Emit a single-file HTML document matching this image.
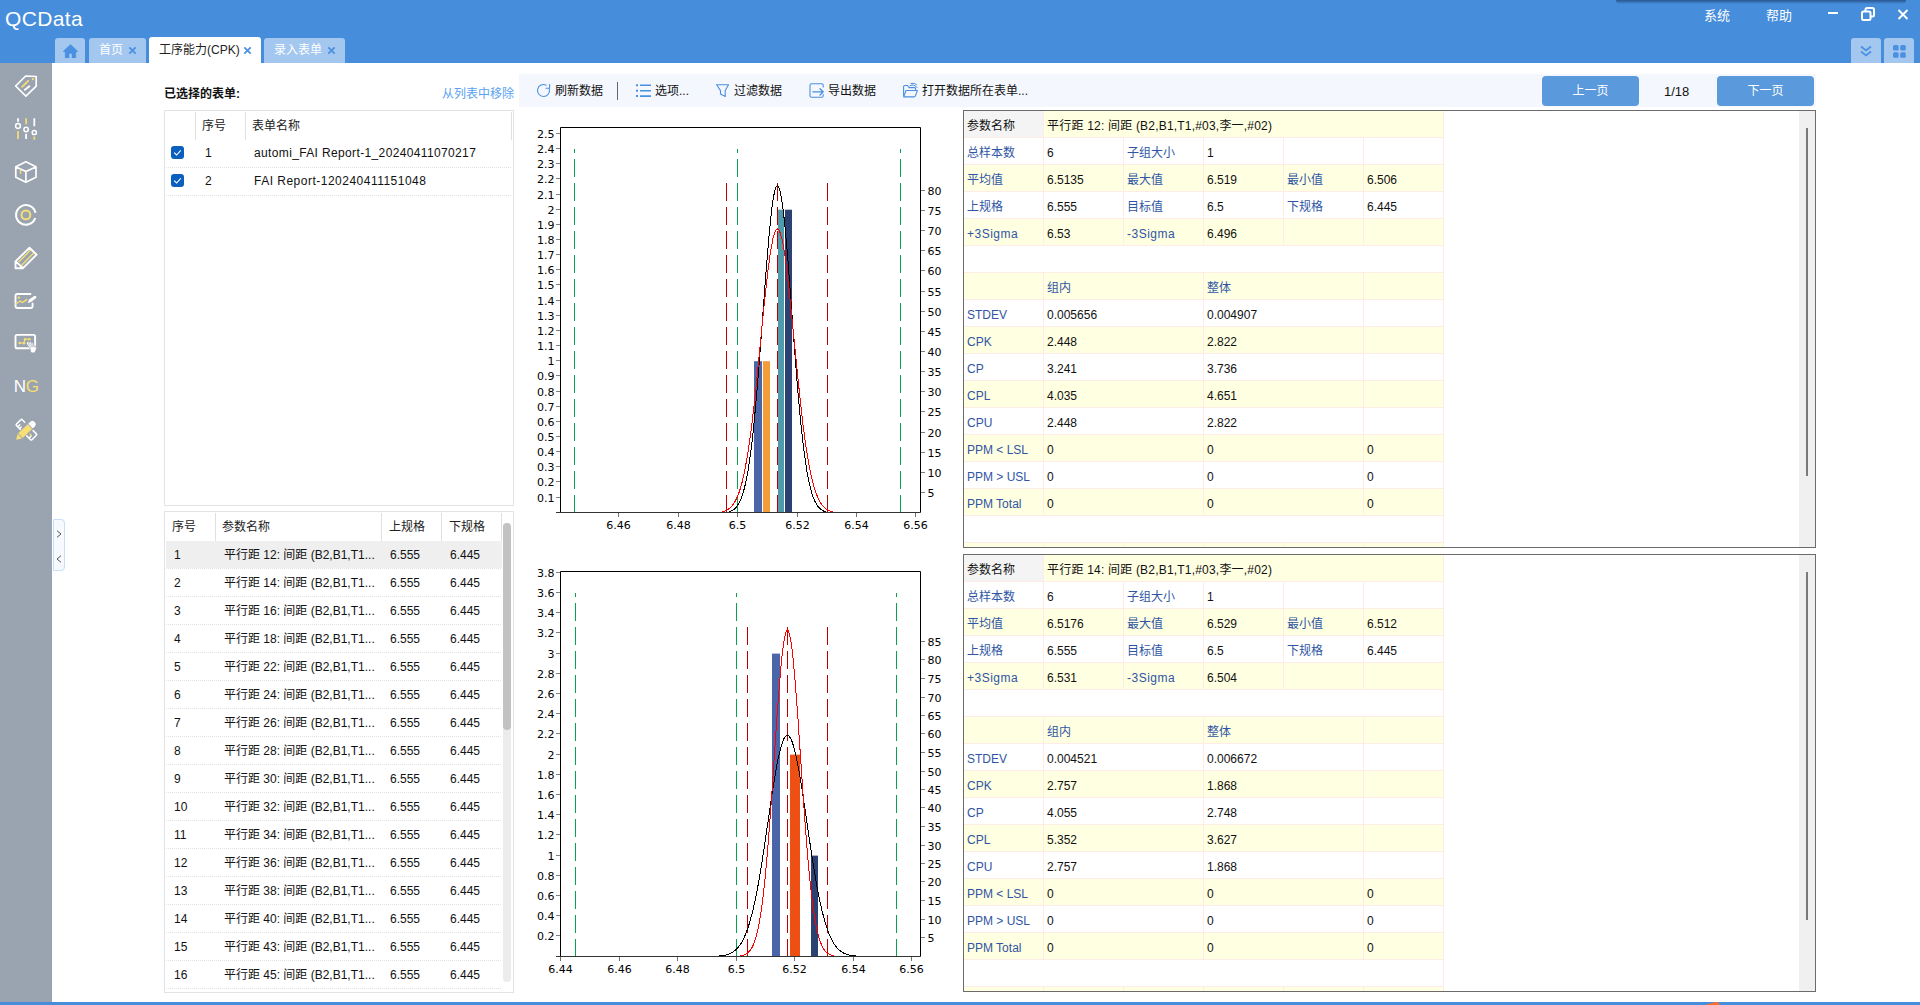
<!DOCTYPE html><html lang="zh-CN"><head><meta charset="utf-8"><title>QCData</title><style>
*{box-sizing:border-box;margin:0;padding:0}
html,body{width:1920px;height:1005px;overflow:hidden;background:#fff}
body{position:relative;font-family:"Liberation Sans","Noto Sans CJK SC",sans-serif;font-size:12px;color:#111;line-height:1}
.abs{position:absolute}
#title{left:0;top:0;width:1920px;height:63px;background:#468ddb}
#logo{left:5px;top:5.5px;font-size:21px;color:#fff;line-height:26px;letter-spacing:.35px}
.tab{top:38px;height:25px;background:#a4c7f0;border-radius:3px 3px 0 0;color:#fff;font-size:12px;line-height:24px;white-space:nowrap}
.tab.act{top:37px;height:26px;background:#fff;color:#222;line-height:26px}
.tab span.t{position:absolute;top:0}
.menu{top:8px;color:#fff;font-size:13px;line-height:16px}
#side{left:0;top:63px;width:52px;height:939px;background:#9aa3b0}
#foot{left:0;top:1002px;width:1920px;height:3px;background:#468ddb}
#tb{left:519px;top:74px;width:1297px;height:33px;background:#f4f7fd}
.tbt{top:75px;height:33px;line-height:33px;font-size:12px;color:#111;white-space:nowrap}
.btn{top:76px;height:30px;width:97px;background:#5a99dc;border-radius:4px;color:#fff;text-align:center;line-height:31px;font-size:12px}
.panel{border:1px solid #e3e3e3;background:#fff}
.hd{color:#222;white-space:nowrap}
.vsep{width:1px;background:#e0e0e0}
.dot{height:1px;left:166px;width:346px;background-image:linear-gradient(90deg,#e0e0e0 1px,transparent 1px);background-size:2px 1px}
.cell{white-space:nowrap;line-height:14px}
.cb{width:13px;height:13px;border-radius:3px;background:#0b5fbf}
.rp{border:1px solid #6b6b6b;background:#fff;overflow:hidden}
.g{position:absolute;height:27px;border-right:1px solid #ffece6;border-bottom:1px solid #ffece6;padding:8px 0 0 3px;white-space:nowrap;line-height:14px;font-size:12px;color:#111}
.g.y{background:#ffffe1}
.g.l{color:#2f55a4}
.g.h{background:#f4f4f4;color:#111}
svg text{font-family:"DejaVu Sans","Liberation Sans",sans-serif;font-size:11px;fill:#000}
</style></head><body><div id="title" class="abs"></div><div class="abs" style="left:1616px;top:0;width:290px;height:4px;background:linear-gradient(to bottom,rgba(38,78,132,.85),rgba(38,78,132,.45) 50%,rgba(38,78,132,0));border-radius:0 0 9px 9px"></div><div id="logo" class="abs">QCData</div><div class="abs tab" style="left:55px;width:30px"><svg class="abs" style="left:7.5px;top:5.5px" width="15" height="14.5" viewBox="0 0 15 14.5"><path d="M7.5 0.4 L0.5 7 Q0.1 7.8 1 7.8 H2.2 V13.4 Q2.2 14.3 3.1 14.3 H6 V9.6 H9 V14.3 H11.9 Q12.8 14.3 12.8 13.4 V7.8 H14 Q14.9 7.8 14.5 7 Z" fill="#4a90e2" stroke="#4a90e2" stroke-width="0.5" stroke-linejoin="round"/></svg></div><div class="abs tab" style="left:89px;width:57px"><span class="t" style="left:10px">首页</span><svg class="abs" style="left:38.5px;top:8px" width="9" height="9" viewBox="0 0 9 9"><path d="M1.3 1.3 L7.7 7.7 M7.7 1.3 L1.3 7.7" stroke="#4a90e2" stroke-width="1.7" fill="none"/></svg></div><div class="abs tab act" style="left:149px;width:112px"><span class="t" style="left:10px">工序能力(CPK)</span><svg class="abs" style="left:93.5px;top:9px" width="9" height="9" viewBox="0 0 9 9"><path d="M1.3 1.3 L7.7 7.7 M7.7 1.3 L1.3 7.7" stroke="#4a90e2" stroke-width="1.7" fill="none"/></svg></div><div class="abs tab" style="left:264px;width:81px"><span class="t" style="left:10px">录入表单</span><svg class="abs" style="left:62.5px;top:8px" width="9" height="9" viewBox="0 0 9 9"><path d="M1.3 1.3 L7.7 7.7 M7.7 1.3 L1.3 7.7" stroke="#4a90e2" stroke-width="1.7" fill="none"/></svg></div><div class="abs tab" style="left:1851px;width:30px"><svg class="abs" style="left:9px;top:7px" width="12" height="12" viewBox="0 0 12 12"><path d="M1 1.5 L6 5.5 L11 1.5 M1 6.5 L6 10.5 L11 6.5" stroke="#4a90e2" stroke-width="1.7" fill="none"/></svg></div><div class="abs tab" style="left:1884px;width:30px"><svg class="abs" style="left:9px;top:7px" width="13" height="13" viewBox="0 0 13 13"><g fill="#4a90e2"><rect x="0" y="0" width="5.6" height="5.6" rx="1.5"/><rect x="7.2" y="0" width="5.6" height="5.6" rx="1.5"/><rect x="0" y="7.2" width="5.6" height="5.6" rx="1.5"/><rect x="7.2" y="7.2" width="5.6" height="5.6" rx="1.5"/></g></svg></div><div class="abs menu" style="left:1704px">系统</div><div class="abs menu" style="left:1766px">帮助</div><div class="abs" style="left:1828px;top:12px;width:10px;height:2px;background:#fff"></div><svg class="abs" style="left:1860px;top:6px" width="16" height="16" viewBox="0 0 16 16"><rect x="2" y="5.5" width="8.5" height="8.5" rx="1.5" fill="none" stroke="#fff" stroke-width="2"/><path d="M5.5 5 V3.5 Q5.5 2 7 2 H12.5 Q14 2 14 3.5 V9 Q14 10.5 12.5 10.5 H11" fill="none" stroke="#fff" stroke-width="2"/></svg><svg class="abs" style="left:1897px;top:9px" width="12" height="11" viewBox="0 0 12 11"><path d="M1.5 1 L10.5 10 M10.5 1 L1.5 10" stroke="#fff" stroke-width="2" fill="none"/></svg><div id="side" class="abs"></div><div id="foot" class="abs"></div><svg class="abs" style="left:0;top:63px" width="52" height="400" viewBox="0 63 52 400" fill="none" stroke-linecap="round" stroke-linejoin="round">
<g stroke="#fff" stroke-width="1.9">
<path d="M15.6 86 L25.7 76 L36.2 76.5 L36.2 86.2 L25.9 96.1 Z" stroke-width="1.7"/>
<path d="M24.9 89.8 L29.4 86.3"/>
<path d="M18 118.2 V121.8 M26.1 133.7 V139 M34.3 118.2 V126.3" stroke-linecap="butt" stroke-width="1.8"/>
<g stroke-width="1.5"><circle cx="18" cy="126" r="2.4"/><circle cx="26.1" cy="129.5" r="2.2"/><circle cx="34.3" cy="132.5" r="2.1"/></g>
<path d="M25.9 161.8 L36 166.7 V177.3 L25.9 182.2 L15.8 177.3 V166.7 Z M16 166.9 L25.9 171.5 L35.8 166.9 M25.9 171.5 V182" stroke-width="1.7"/>
<path d="M35.5 212.9 A9.8 9.8 0 1 0 35.2 218" stroke-width="2.1" stroke-linecap="butt"/>
<path d="M15.5 268.2 V261.4 L29.5 247.7 L36.6 254.7 L23 268.2 Z M16 261.6 L22.6 267.8"/>
<path d="M30.5 294 H17.4 Q15.5 294 15.5 295.9 V306.1 Q15.5 308 17.4 308 H30.7 Q32.6 308 32.6 306.1 V303.5"/>
<rect x="15.5" y="334.9" width="19.6" height="13.4" rx="1.6"/>
</g>
<g stroke="#f7df74" stroke-width="1.7">
<path d="M22.1 86.9 L28.2 80.8"/>
<path d="M18 131 V139 M26.1 118.2 V124.3 M34.3 136.4 V139.8" stroke-linecap="butt"/>
<path d="M20.5 170 V173.4" stroke-width="1.4"/>
<circle cx="25.9" cy="214.9" r="4.4" stroke-width="2"/>
<path d="M18.9 261.8 L30.2 250.5 M21.7 265.3 L33.3 253.3" stroke-width="1.3"/>
<path d="M15.6 304 L20.3 301 L22.3 302.6 L27 299.4" stroke-width="1.3"/>
<path d="M19.7 343 H23.9 L25.1 339.2 H29.3" stroke-width="1.1"/>
</g>
<g fill="#f7df74" stroke="none">
<circle cx="32.9" cy="79.1" r="1.15"/>
<circle cx="18.9" cy="297.6" r="1.2"/>
<circle cx="19.7" cy="343" r="1.3"/><circle cx="23.9" cy="343.2" r="1.3"/><circle cx="25.1" cy="339.2" r="1.3"/><circle cx="29.3" cy="339.2" r="1.3"/>
</g>
<!-- pen of chart-edit -->
<path d="M27.6 302.9 L29.2 299.6 L34.2 295.9 Q35.4 295.3 36.1 296.3 Q36.8 297.3 35.9 298.2 L31 302 Z" fill="#fff" stroke="none"/>
<!-- hand -->
<g stroke="#9aa3b0" stroke-width="0.7">
<path d="M26.4 343.4 L30.2 349 L30.6 352 Q33 354.2 35.3 352 Q37 349 36 345.6 L34.6 347 L32.6 342.4 L31.6 342.9 L30.4 341.6 L29.3 342.5 L27.8 341.6 Z" fill="#fff"/>
</g>
<path d="M28.4 343.4 L30.8 347.4 M29.9 343 L32 346.8 M31.6 343.6 L33.2 347" stroke="#9aa3b0" stroke-width="0.6"/>
<!-- pencil+ruler -->
<g transform="translate(26.4 429.7) rotate(-45)">
<path d="M-4.1 -4.6 V-10 Q-4.1 -11 -3.1 -11 H3.1 Q4.1 -11 4.1 -10 V-6.5 M-4 -8.2 H-1.2 M-4 -5.6 H-2" stroke="#fff" stroke-width="1.5"/>
<path d="M4.1 5.4 V10 Q4.1 11 3.1 11 H-3.1 Q-4.1 11 -4.1 10 V4.6 M-4 7.8 H-1.4" stroke="#fff" stroke-width="1.5"/>
<path d="M-0.6 5.6 V7.6" stroke="#f7df74" stroke-width="1.3"/>
</g>
<g transform="translate(25.4 430.9) rotate(-43.4)">
<path d="M-12.8 0 L-7.6 -3.2 V3.2 Z" fill="#f7df74" stroke="none"/>
<rect x="-6.8" y="-3.2" width="13" height="6.4" fill="#f7df74" stroke="none"/>
<path d="M7 -3.2 H10.2 Q12.8 -3.2 12.8 -0.6 V0.6 Q12.8 3.2 10.2 3.2 H7 Z" fill="#fff" stroke="none"/>
</g>
</svg>
<div class="abs" style="left:13.7px;top:377px;font-size:17px;line-height:20px;color:#fff;letter-spacing:-0.3px">N<span style="color:#f7df74">G</span></div>
<div class="abs" style="left:53px;top:519px;width:12px;height:52px;border:1px solid #c5dff6;border-radius:1px 4px 4px 1px;background:#f6fafe"></div><svg class="abs" style="left:56px;top:529.7px" width="6" height="8" viewBox="0 0 6 8"><path d="M1 0.7 L5 4 L1 7.3" stroke="#555" stroke-width="1" fill="none"/></svg><svg class="abs" style="left:56px;top:554.7px" width="6" height="8" viewBox="0 0 6 8"><path d="M5 0.7 L1 4 L5 7.3" stroke="#555" stroke-width="1" fill="none"/></svg><div class="abs" style="left:164px;top:87px;font-weight:bold;font-size:12px;line-height:14px;color:#111">已选择的表单:</div><div class="abs" style="left:442px;top:87px;font-size:12px;line-height:14px;color:#5aa2ef">从列表中移除</div><div class="abs panel" style="left:164px;top:110px;width:350px;height:396px"></div><div class="abs vsep" style="left:195px;top:112px;height:28px"></div><div class="abs vsep" style="left:245px;top:112px;height:28px"></div><div class="abs vsep" style="left:511px;top:112px;height:28px"></div><div class="abs hd" style="left:202px;top:119px;line-height:14px">序号</div><div class="abs hd" style="left:252px;top:119px;line-height:14px">表单名称</div><div class="abs cb" style="left:171px;top:146px"><svg width="13" height="13" viewBox="0 0 13 13"><path d="M3.2 6.6 L5.6 9 L9.8 4.4" stroke="#fff" stroke-width="1.1" fill="none"/></svg></div><div class="abs cell" style="left:205px;top:146px">1</div><div class="abs cell" style="left:254px;top:146px;letter-spacing:0.36px">automi_FAI Report-1_20240411070217</div><div class="abs dot" style="top:167px"></div><div class="abs cb" style="left:171px;top:174px"><svg width="13" height="13" viewBox="0 0 13 13"><path d="M3.2 6.6 L5.6 9 L9.8 4.4" stroke="#fff" stroke-width="1.1" fill="none"/></svg></div><div class="abs cell" style="left:205px;top:174px">2</div><div class="abs cell" style="left:254px;top:174px;letter-spacing:0.49px">FAI Report-120240411151048</div><div class="abs dot" style="top:195px"></div><div class="abs panel" style="left:164px;top:511px;width:350px;height:482px"></div><div class="abs vsep" style="left:215px;top:513px;height:28px"></div><div class="abs vsep" style="left:381px;top:513px;height:28px"></div><div class="abs vsep" style="left:441px;top:513px;height:28px"></div><div class="abs vsep" style="left:501px;top:513px;height:28px"></div><div class="abs hd" style="left:172px;top:520px;line-height:14px">序号</div><div class="abs hd" style="left:222px;top:520px;line-height:14px">参数名称</div><div class="abs hd" style="left:389px;top:520px;line-height:14px">上规格</div><div class="abs hd" style="left:449px;top:520px;line-height:14px">下规格</div><div class="abs" style="left:166px;top:541px;width:336px;height:27px;background:#efefef"></div><div class="abs cell" style="left:174px;top:548px">1</div><div class="abs cell" style="left:224px;top:548px">平行距 12: 间距 (B2,B1,T1...</div><div class="abs cell" style="left:390px;top:548px">6.555</div><div class="abs cell" style="left:450px;top:548px">6.445</div><div class="abs dot" style="top:568px;width:336px"></div><div class="abs cell" style="left:174px;top:576px">2</div><div class="abs cell" style="left:224px;top:576px">平行距 14: 间距 (B2,B1,T1...</div><div class="abs cell" style="left:390px;top:576px">6.555</div><div class="abs cell" style="left:450px;top:576px">6.445</div><div class="abs dot" style="top:596px;width:336px"></div><div class="abs cell" style="left:174px;top:604px">3</div><div class="abs cell" style="left:224px;top:604px">平行距 16: 间距 (B2,B1,T1...</div><div class="abs cell" style="left:390px;top:604px">6.555</div><div class="abs cell" style="left:450px;top:604px">6.445</div><div class="abs dot" style="top:624px;width:336px"></div><div class="abs cell" style="left:174px;top:632px">4</div><div class="abs cell" style="left:224px;top:632px">平行距 18: 间距 (B2,B1,T1...</div><div class="abs cell" style="left:390px;top:632px">6.555</div><div class="abs cell" style="left:450px;top:632px">6.445</div><div class="abs dot" style="top:652px;width:336px"></div><div class="abs cell" style="left:174px;top:660px">5</div><div class="abs cell" style="left:224px;top:660px">平行距 22: 间距 (B2,B1,T1...</div><div class="abs cell" style="left:390px;top:660px">6.555</div><div class="abs cell" style="left:450px;top:660px">6.445</div><div class="abs dot" style="top:680px;width:336px"></div><div class="abs cell" style="left:174px;top:688px">6</div><div class="abs cell" style="left:224px;top:688px">平行距 24: 间距 (B2,B1,T1...</div><div class="abs cell" style="left:390px;top:688px">6.555</div><div class="abs cell" style="left:450px;top:688px">6.445</div><div class="abs dot" style="top:708px;width:336px"></div><div class="abs cell" style="left:174px;top:716px">7</div><div class="abs cell" style="left:224px;top:716px">平行距 26: 间距 (B2,B1,T1...</div><div class="abs cell" style="left:390px;top:716px">6.555</div><div class="abs cell" style="left:450px;top:716px">6.445</div><div class="abs dot" style="top:736px;width:336px"></div><div class="abs cell" style="left:174px;top:744px">8</div><div class="abs cell" style="left:224px;top:744px">平行距 28: 间距 (B2,B1,T1...</div><div class="abs cell" style="left:390px;top:744px">6.555</div><div class="abs cell" style="left:450px;top:744px">6.445</div><div class="abs dot" style="top:764px;width:336px"></div><div class="abs cell" style="left:174px;top:772px">9</div><div class="abs cell" style="left:224px;top:772px">平行距 30: 间距 (B2,B1,T1...</div><div class="abs cell" style="left:390px;top:772px">6.555</div><div class="abs cell" style="left:450px;top:772px">6.445</div><div class="abs dot" style="top:792px;width:336px"></div><div class="abs cell" style="left:174px;top:800px">10</div><div class="abs cell" style="left:224px;top:800px">平行距 32: 间距 (B2,B1,T1...</div><div class="abs cell" style="left:390px;top:800px">6.555</div><div class="abs cell" style="left:450px;top:800px">6.445</div><div class="abs dot" style="top:820px;width:336px"></div><div class="abs cell" style="left:174px;top:828px">11</div><div class="abs cell" style="left:224px;top:828px">平行距 34: 间距 (B2,B1,T1...</div><div class="abs cell" style="left:390px;top:828px">6.555</div><div class="abs cell" style="left:450px;top:828px">6.445</div><div class="abs dot" style="top:848px;width:336px"></div><div class="abs cell" style="left:174px;top:856px">12</div><div class="abs cell" style="left:224px;top:856px">平行距 36: 间距 (B2,B1,T1...</div><div class="abs cell" style="left:390px;top:856px">6.555</div><div class="abs cell" style="left:450px;top:856px">6.445</div><div class="abs dot" style="top:876px;width:336px"></div><div class="abs cell" style="left:174px;top:884px">13</div><div class="abs cell" style="left:224px;top:884px">平行距 38: 间距 (B2,B1,T1...</div><div class="abs cell" style="left:390px;top:884px">6.555</div><div class="abs cell" style="left:450px;top:884px">6.445</div><div class="abs dot" style="top:904px;width:336px"></div><div class="abs cell" style="left:174px;top:912px">14</div><div class="abs cell" style="left:224px;top:912px">平行距 40: 间距 (B2,B1,T1...</div><div class="abs cell" style="left:390px;top:912px">6.555</div><div class="abs cell" style="left:450px;top:912px">6.445</div><div class="abs dot" style="top:932px;width:336px"></div><div class="abs cell" style="left:174px;top:940px">15</div><div class="abs cell" style="left:224px;top:940px">平行距 43: 间距 (B2,B1,T1...</div><div class="abs cell" style="left:390px;top:940px">6.555</div><div class="abs cell" style="left:450px;top:940px">6.445</div><div class="abs dot" style="top:960px;width:336px"></div><div class="abs cell" style="left:174px;top:968px">16</div><div class="abs cell" style="left:224px;top:968px">平行距 45: 间距 (B2,B1,T1...</div><div class="abs cell" style="left:390px;top:968px">6.555</div><div class="abs cell" style="left:450px;top:968px">6.445</div><div class="abs dot" style="top:988px;width:336px"></div><div class="abs" style="left:503px;top:523px;width:8px;height:459px;background:#ececec;border-radius:4px"></div><div class="abs" style="left:503px;top:523px;width:8px;height:207px;background:#c2c2c2;border-radius:4px"></div><div id="tb" class="abs"></div><svg class="abs" style="left:530px;top:78px" width="400" height="26" viewBox="530 78 400 26" fill="none" stroke="#4a90e2" stroke-width="1.1" stroke-linecap="round" stroke-linejoin="round">
<path d="M546.2 85.15 A6 6 0 1 0 549.35 89.1"/>
<path d="M549.6 84.5 V88.3 H546.1"/>
<g stroke-width="1.6" stroke-linecap="butt"><path d="M640 85.3 H651 M640 90.7 H651 M640 96.1 H651"/><path d="M636 85.3 H638 M636 90.7 H638 M636 96.1 H638" stroke-width="2"/></g>
<path d="M716.6 84.7 H728.6 L725.2 90.6 V96.4 L720.5 94 V90.6 Z"/>
<path d="M823.2 87 V85.2 Q823.2 83.7 821.7 83.7 H811.5 Q810 83.7 810 85.2 V95.8 Q810 97.3 811.5 97.3 H821.7 Q823.2 97.3 823.2 95.8 V94.6"/>
<path d="M812.8 91.8 H823 M820 88.7 L823.2 91.8 L820 95" stroke-width="1.3"/>
<path d="M903.6 95.8 V86.6 Q903.6 85.5 904.7 85.5 H907.4 L909.2 87.6 H914.5 Q915.6 87.6 915.6 88.7 V90.2"/>
<path d="M903.7 96.9 L906 90.5 H917.4 L915.3 96.1 Q915 96.9 914 96.9 Z"/>
<path d="M910 85.6 Q914.5 83.6 917 87.6 M911 83.4 Q915 82.6 916.6 84.6" stroke-width="1"/>
</svg>
<div class="abs tbt" style="left:555px">刷新数据</div><div class="abs tbt" style="left:655px">选项...</div><div class="abs tbt" style="left:734px">过滤数据</div><div class="abs tbt" style="left:828px">导出数据</div><div class="abs tbt" style="left:922px">打开数据所在表单...</div><div class="abs" style="left:617px;top:82px;width:1px;height:18px;background:#666"></div><div class="abs btn" style="left:1542px">上一页</div><div class="abs btn" style="left:1717px">下一页</div><div class="abs" style="left:1664px;top:84px;font-size:13px;line-height:15px;color:#111">1/18</div><svg class="abs" style="left:520px;top:107px" width="440" height="445" viewBox="520 107 440 445"><rect x="754" y="361.2" width="8" height="150.8" fill="#4a66a8"/><rect x="763" y="361.2" width="7" height="150.8" fill="#f39c38"/><rect x="778" y="209.7" width="6" height="302.3" fill="#4f9aab"/><rect x="785" y="209.7" width="7" height="302.3" fill="#2b4172"/><line x1="574.5" y1="513" x2="574.5" y2="149" stroke="#06a24d" stroke-width="1" stroke-dasharray="18 6"/><line x1="737.5" y1="513" x2="737.5" y2="149" stroke="#06a24d" stroke-width="1" stroke-dasharray="18 6"/><line x1="900.5" y1="513" x2="900.5" y2="149" stroke="#06a24d" stroke-width="1" stroke-dasharray="18 6"/><line x1="726.5" y1="513" x2="726.5" y2="183" stroke="#c00000" stroke-width="1" stroke-dasharray="18 6"/><line x1="777.5" y1="513" x2="777.5" y2="183" stroke="#c00000" stroke-width="1" stroke-dasharray="18 6"/><line x1="827.5" y1="513" x2="827.5" y2="183" stroke="#c00000" stroke-width="1" stroke-dasharray="18 6"/><polyline points="725.7,512.6 727.0,512.4 728.3,512.1 729.6,511.7 730.9,511.2 732.2,510.6 733.5,509.7 734.8,508.7 736.1,507.4 737.3,505.8 738.6,503.7 739.9,501.3 741.2,498.3 742.5,494.6 743.8,490.3 745.1,485.2 746.4,479.3 747.7,472.4 749.0,464.5 750.3,455.5 751.6,445.4 752.9,434.1 754.2,421.7 755.4,408.2 756.7,393.7 758.0,378.1 759.3,361.8 760.6,344.8 761.9,327.4 763.2,309.8 764.5,292.2 765.8,275.0 767.1,258.6 768.4,243.1 769.7,228.9 771.0,216.3 772.2,205.6 773.5,197.0 774.8,190.7 776.1,186.8 777.4,185.6 778.7,186.8 780.0,190.7 781.3,197.0 782.6,205.6 783.9,216.3 785.2,228.9 786.5,243.1 787.8,258.6 789.0,275.0 790.3,292.2 791.6,309.8 792.9,327.4 794.2,344.8 795.5,361.8 796.8,378.1 798.1,393.7 799.4,408.2 800.7,421.7 802.0,434.1 803.3,445.4 804.6,455.5 805.9,464.5 807.1,472.4 808.4,479.3 809.7,485.2 811.0,490.3 812.3,494.6 813.6,498.3 814.9,501.3 816.2,503.7 817.5,505.8 818.8,507.4 820.1,508.7 821.4,509.7 822.7,510.6 823.9,511.2 825.2,511.7 826.5,512.1 827.8,512.4 829.1,512.6" fill="none" stroke="#000" stroke-width="1" shape-rendering="crispEdges"/><polyline points="717.8,512.7 719.3,512.5 720.8,512.2 722.3,511.9 723.8,511.5 725.3,510.9 726.8,510.2 728.3,509.3 729.7,508.2 731.2,506.7 732.7,505.0 734.2,502.8 735.7,500.2 737.2,497.1 738.7,493.4 740.2,488.9 741.7,483.8 743.1,477.8 744.6,470.9 746.1,463.1 747.6,454.4 749.1,444.6 750.6,433.9 752.1,422.1 753.6,409.5 755.1,396.0 756.6,381.8 758.0,367.1 759.5,352.0 761.0,336.7 762.5,321.5 764.0,306.6 765.5,292.3 767.0,278.8 768.5,266.5 770.0,255.6 771.5,246.3 772.9,238.8 774.4,233.4 775.9,230.1 777.4,228.9 778.9,230.1 780.4,233.4 781.9,238.8 783.4,246.3 784.9,255.6 786.4,266.5 787.8,278.8 789.3,292.3 790.8,306.6 792.3,321.5 793.8,336.7 795.3,352.0 796.8,367.1 798.3,381.8 799.8,396.0 801.3,409.5 802.7,422.1 804.2,433.9 805.7,444.6 807.2,454.4 808.7,463.1 810.2,470.9 811.7,477.8 813.2,483.8 814.7,488.9 816.2,493.4 817.6,497.1 819.1,500.2 820.6,502.8 822.1,505.0 823.6,506.7 825.1,508.2 826.6,509.3 828.1,510.2 829.6,510.9 831.1,511.5 832.5,511.9 834.0,512.2 835.5,512.5 837.0,512.7" fill="none" stroke="#f00" stroke-width="1" shape-rendering="crispEdges"/><path d="M560.5 512.5 V127.5 H920.5 V512.5" fill="none" stroke="#000" stroke-width="1"/><path d="M556 512.5 H920.5" fill="none" stroke="#333" stroke-width="1"/><path d="M556 497.5 H560" stroke="#808080"/><text x="554.6" y="502.3" text-anchor="end">0.1</text><path d="M556 481.5 H560" stroke="#808080"/><text x="554.6" y="486.3" text-anchor="end">0.2</text><path d="M556 466.5 H560" stroke="#808080"/><text x="554.6" y="471.3" text-anchor="end">0.3</text><path d="M556 451.5 H560" stroke="#808080"/><text x="554.6" y="456.3" text-anchor="end">0.4</text><path d="M556 436.5 H560" stroke="#808080"/><text x="554.6" y="441.3" text-anchor="end">0.5</text><path d="M556 421.5 H560" stroke="#808080"/><text x="554.6" y="426.3" text-anchor="end">0.6</text><path d="M556 406.5 H560" stroke="#808080"/><text x="554.6" y="411.3" text-anchor="end">0.7</text><path d="M556 391.5 H560" stroke="#808080"/><text x="554.6" y="396.3" text-anchor="end">0.8</text><path d="M556 375.5 H560" stroke="#808080"/><text x="554.6" y="380.3" text-anchor="end">0.9</text><path d="M556 360.5 H560" stroke="#808080"/><text x="554.6" y="365.3" text-anchor="end">1</text><path d="M556 345.5 H560" stroke="#808080"/><text x="554.6" y="350.3" text-anchor="end">1.1</text><path d="M556 330.5 H560" stroke="#808080"/><text x="554.6" y="335.3" text-anchor="end">1.2</text><path d="M556 315.5 H560" stroke="#808080"/><text x="554.6" y="320.3" text-anchor="end">1.3</text><path d="M556 300.5 H560" stroke="#808080"/><text x="554.6" y="305.3" text-anchor="end">1.4</text><path d="M556 284.5 H560" stroke="#808080"/><text x="554.6" y="289.3" text-anchor="end">1.5</text><path d="M556 269.5 H560" stroke="#808080"/><text x="554.6" y="274.3" text-anchor="end">1.6</text><path d="M556 254.5 H560" stroke="#808080"/><text x="554.6" y="259.3" text-anchor="end">1.7</text><path d="M556 239.5 H560" stroke="#808080"/><text x="554.6" y="244.3" text-anchor="end">1.8</text><path d="M556 224.5 H560" stroke="#808080"/><text x="554.6" y="229.3" text-anchor="end">1.9</text><path d="M556 209.5 H560" stroke="#808080"/><text x="554.6" y="214.3" text-anchor="end">2</text><path d="M556 194.5 H560" stroke="#808080"/><text x="554.6" y="199.3" text-anchor="end">2.1</text><path d="M556 178.5 H560" stroke="#808080"/><text x="554.6" y="183.3" text-anchor="end">2.2</text><path d="M556 163.5 H560" stroke="#808080"/><text x="554.6" y="168.3" text-anchor="end">2.3</text><path d="M556 148.5 H560" stroke="#808080"/><text x="554.6" y="153.3" text-anchor="end">2.4</text><path d="M556 133.5 H560" stroke="#808080"/><text x="554.6" y="138.3" text-anchor="end">2.5</text><path d="M921 492.5 H925" stroke="#808080"/><text x="927.5" y="497.3">5</text><path d="M921 472.5 H925" stroke="#808080"/><text x="927.5" y="477.3">10</text><path d="M921 452.5 H925" stroke="#808080"/><text x="927.5" y="457.3">15</text><path d="M921 432.5 H925" stroke="#808080"/><text x="927.5" y="437.3">20</text><path d="M921 411.5 H925" stroke="#808080"/><text x="927.5" y="416.3">25</text><path d="M921 391.5 H925" stroke="#808080"/><text x="927.5" y="396.3">30</text><path d="M921 371.5 H925" stroke="#808080"/><text x="927.5" y="376.3">35</text><path d="M921 351.5 H925" stroke="#808080"/><text x="927.5" y="356.3">40</text><path d="M921 331.5 H925" stroke="#808080"/><text x="927.5" y="336.3">45</text><path d="M921 311.5 H925" stroke="#808080"/><text x="927.5" y="316.3">50</text><path d="M921 291.5 H925" stroke="#808080"/><text x="927.5" y="296.3">55</text><path d="M921 270.5 H925" stroke="#808080"/><text x="927.5" y="275.3">60</text><path d="M921 250.5 H925" stroke="#808080"/><text x="927.5" y="255.3">65</text><path d="M921 230.5 H925" stroke="#808080"/><text x="927.5" y="235.3">70</text><path d="M921 210.5 H925" stroke="#808080"/><text x="927.5" y="215.3">75</text><path d="M921 190.5 H925" stroke="#808080"/><text x="927.5" y="195.3">80</text><path d="M618.5 513 V517" stroke="#707070"/><text x="618.5" y="529" text-anchor="middle">6.46</text><path d="M678.5 513 V517" stroke="#707070"/><text x="678.5" y="529" text-anchor="middle">6.48</text><path d="M737.5 513 V517" stroke="#707070"/><text x="737.5" y="529" text-anchor="middle">6.5</text><path d="M797.5 513 V517" stroke="#707070"/><text x="797.5" y="529" text-anchor="middle">6.52</text><path d="M856.5 513 V517" stroke="#707070"/><text x="856.5" y="529" text-anchor="middle">6.54</text><path d="M915.5 513 V517" stroke="#707070"/><text x="915.5" y="529" text-anchor="middle">6.56</text></svg><svg class="abs" style="left:520px;top:551px" width="440" height="445" viewBox="520 551 440 445"><rect x="772" y="653.6" width="8" height="302.4" fill="#4a66a8"/><rect x="790" y="754.6" width="10" height="201.4" fill="#ee5014"/><rect x="811" y="855.6" width="7" height="100.4" fill="#2b4172"/><line x1="575.5" y1="957" x2="575.5" y2="593" stroke="#06a24d" stroke-width="1" stroke-dasharray="18 6"/><line x1="736.5" y1="957" x2="736.5" y2="593" stroke="#06a24d" stroke-width="1" stroke-dasharray="18 6"/><line x1="896.5" y1="957" x2="896.5" y2="593" stroke="#06a24d" stroke-width="1" stroke-dasharray="18 6"/><line x1="747.5" y1="957" x2="747.5" y2="627" stroke="#c00000" stroke-width="1" stroke-dasharray="18 6"/><line x1="787.5" y1="957" x2="787.5" y2="627" stroke="#c00000" stroke-width="1" stroke-dasharray="18 6"/><line x1="827.5" y1="957" x2="827.5" y2="627" stroke="#c00000" stroke-width="1" stroke-dasharray="18 6"/><polyline points="718.1,956.1 719.9,955.9 721.6,955.7 723.3,955.5 725.1,955.2 726.8,954.7 728.5,954.2 730.3,953.5 732.0,952.6 733.7,951.5 735.5,950.1 737.2,948.4 738.9,946.4 740.7,944.0 742.4,941.1 744.1,937.6 745.8,933.6 747.6,929.0 749.3,923.6 751.0,917.5 752.8,910.7 754.5,903.1 756.2,894.7 758.0,885.6 759.7,875.8 761.4,865.3 763.2,854.3 764.9,842.8 766.6,831.0 768.4,819.1 770.1,807.3 771.8,795.7 773.6,784.6 775.3,774.1 777.0,764.5 778.7,756.0 780.5,748.8 782.2,743.0 783.9,738.7 785.7,736.1 787.4,735.3 789.1,736.1 790.9,738.7 792.6,743.0 794.3,748.8 796.1,756.0 797.8,764.5 799.5,774.1 801.3,784.6 803.0,795.7 804.7,807.3 806.4,819.1 808.2,831.0 809.9,842.8 811.6,854.3 813.4,865.3 815.1,875.8 816.8,885.6 818.6,894.7 820.3,903.1 822.0,910.7 823.8,917.5 825.5,923.6 827.2,929.0 829.0,933.6 830.7,937.6 832.4,941.1 834.2,944.0 835.9,946.4 837.6,948.4 839.3,950.1 841.1,951.5 842.8,952.6 844.5,953.5 846.3,954.2 848.0,954.7 849.7,955.2 851.5,955.5 853.2,955.7 854.9,955.9 856.7,956.1" fill="none" stroke="#000" stroke-width="1" shape-rendering="crispEdges"/><polyline points="740.5,955.9 741.6,955.7 742.8,955.4 744.0,955.0 745.2,954.5 746.3,953.9 747.5,953.1 748.7,952.0 749.9,950.7 751.0,949.1 752.2,947.1 753.4,944.6 754.6,941.6 755.7,938.0 756.9,933.7 758.1,928.6 759.2,922.7 760.4,915.8 761.6,908.0 762.8,899.0 763.9,888.9 765.1,877.7 766.3,865.4 767.5,851.9 768.6,837.4 769.8,821.9 771.0,805.6 772.2,788.7 773.3,771.3 774.5,753.8 775.7,736.3 776.8,719.2 778.0,702.7 779.2,687.3 780.4,673.2 781.5,660.6 782.7,649.9 783.9,641.4 785.1,635.1 786.2,631.3 787.4,630.0 788.6,631.3 789.7,635.1 790.9,641.4 792.1,649.9 793.3,660.6 794.4,673.2 795.6,687.3 796.8,702.7 798.0,719.2 799.1,736.3 800.3,753.8 801.5,771.3 802.7,788.7 803.8,805.6 805.0,821.9 806.2,837.4 807.3,851.9 808.5,865.4 809.7,877.7 810.9,888.9 812.0,899.0 813.2,908.0 814.4,915.8 815.6,922.7 816.7,928.6 817.9,933.7 819.1,938.0 820.3,941.6 821.4,944.6 822.6,947.1 823.8,949.1 824.9,950.7 826.1,952.0 827.3,953.1 828.5,953.9 829.6,954.5 830.8,955.0 832.0,955.4 833.2,955.7 834.3,955.9" fill="none" stroke="#f00" stroke-width="1" shape-rendering="crispEdges"/><path d="M560.5 956.5 V571.5 H920.5 V956.5" fill="none" stroke="#000" stroke-width="1"/><path d="M556 956.5 H920.5" fill="none" stroke="#333" stroke-width="1"/><path d="M556 935.5 H560" stroke="#808080"/><text x="554.6" y="940.3" text-anchor="end">0.2</text><path d="M556 915.5 H560" stroke="#808080"/><text x="554.6" y="920.3" text-anchor="end">0.4</text><path d="M556 895.5 H560" stroke="#808080"/><text x="554.6" y="900.3" text-anchor="end">0.6</text><path d="M556 875.5 H560" stroke="#808080"/><text x="554.6" y="880.3" text-anchor="end">0.8</text><path d="M556 855.5 H560" stroke="#808080"/><text x="554.6" y="860.3" text-anchor="end">1</text><path d="M556 834.5 H560" stroke="#808080"/><text x="554.6" y="839.3" text-anchor="end">1.2</text><path d="M556 814.5 H560" stroke="#808080"/><text x="554.6" y="819.3" text-anchor="end">1.4</text><path d="M556 794.5 H560" stroke="#808080"/><text x="554.6" y="799.3" text-anchor="end">1.6</text><path d="M556 774.5 H560" stroke="#808080"/><text x="554.6" y="779.3" text-anchor="end">1.8</text><path d="M556 754.5 H560" stroke="#808080"/><text x="554.6" y="759.3" text-anchor="end">2</text><path d="M556 733.5 H560" stroke="#808080"/><text x="554.6" y="738.3" text-anchor="end">2.2</text><path d="M556 713.5 H560" stroke="#808080"/><text x="554.6" y="718.3" text-anchor="end">2.4</text><path d="M556 693.5 H560" stroke="#808080"/><text x="554.6" y="698.3" text-anchor="end">2.6</text><path d="M556 673.5 H560" stroke="#808080"/><text x="554.6" y="678.3" text-anchor="end">2.8</text><path d="M556 653.5 H560" stroke="#808080"/><text x="554.6" y="658.3" text-anchor="end">3</text><path d="M556 632.5 H560" stroke="#808080"/><text x="554.6" y="637.3" text-anchor="end">3.2</text><path d="M556 612.5 H560" stroke="#808080"/><text x="554.6" y="617.3" text-anchor="end">3.4</text><path d="M556 592.5 H560" stroke="#808080"/><text x="554.6" y="597.3" text-anchor="end">3.6</text><path d="M556 572.5 H560" stroke="#808080"/><text x="554.6" y="577.3" text-anchor="end">3.8</text><path d="M921 937.5 H925" stroke="#808080"/><text x="927.5" y="942.3">5</text><path d="M921 919.5 H925" stroke="#808080"/><text x="927.5" y="924.3">10</text><path d="M921 900.5 H925" stroke="#808080"/><text x="927.5" y="905.3">15</text><path d="M921 881.5 H925" stroke="#808080"/><text x="927.5" y="886.3">20</text><path d="M921 863.5 H925" stroke="#808080"/><text x="927.5" y="868.3">25</text><path d="M921 845.5 H925" stroke="#808080"/><text x="927.5" y="850.3">30</text><path d="M921 826.5 H925" stroke="#808080"/><text x="927.5" y="831.3">35</text><path d="M921 807.5 H925" stroke="#808080"/><text x="927.5" y="812.3">40</text><path d="M921 789.5 H925" stroke="#808080"/><text x="927.5" y="794.3">45</text><path d="M921 771.5 H925" stroke="#808080"/><text x="927.5" y="776.3">50</text><path d="M921 752.5 H925" stroke="#808080"/><text x="927.5" y="757.3">55</text><path d="M921 733.5 H925" stroke="#808080"/><text x="927.5" y="738.3">60</text><path d="M921 715.5 H925" stroke="#808080"/><text x="927.5" y="720.3">65</text><path d="M921 697.5 H925" stroke="#808080"/><text x="927.5" y="702.3">70</text><path d="M921 678.5 H925" stroke="#808080"/><text x="927.5" y="683.3">75</text><path d="M921 659.5 H925" stroke="#808080"/><text x="927.5" y="664.3">80</text><path d="M921 641.5 H925" stroke="#808080"/><text x="927.5" y="646.3">85</text><path d="M560.5 957 V961" stroke="#707070"/><text x="560.5" y="973" text-anchor="middle">6.44</text><path d="M619.5 957 V961" stroke="#707070"/><text x="619.5" y="973" text-anchor="middle">6.46</text><path d="M677.5 957 V961" stroke="#707070"/><text x="677.5" y="973" text-anchor="middle">6.48</text><path d="M736.5 957 V961" stroke="#707070"/><text x="736.5" y="973" text-anchor="middle">6.5</text><path d="M794.5 957 V961" stroke="#707070"/><text x="794.5" y="973" text-anchor="middle">6.52</text><path d="M853.5 957 V961" stroke="#707070"/><text x="853.5" y="973" text-anchor="middle">6.54</text><path d="M911.5 957 V961" stroke="#707070"/><text x="911.5" y="973" text-anchor="middle">6.56</text></svg><div class="abs rp" style="left:963px;top:110px;width:853px;height:438px"><div class="abs" style="left:835px;top:0;width:16px;height:436px;background:#f0f0f0"></div><div class="abs" style="left:842px;top:17px;width:2px;height:348px;background:#7a7a7a"></div><div class="g h" style="left:0px;top:0px;width:80px">参数名称</div><div class="g y" style="left:80px;top:0px;width:400px"><span style="letter-spacing:.2px">平行距 12: 间距 (B2,B1,T1,#03,李一,#02)</span></div><div class="g l" style="left:0px;top:27px;width:80px">总样本数</div><div class="g " style="left:80px;top:27px;width:80px">6</div><div class="g l" style="left:160px;top:27px;width:80px">子组大小</div><div class="g " style="left:240px;top:27px;width:80px">1</div><div class="g " style="left:320px;top:27px;width:80px"></div><div class="g " style="left:400px;top:27px;width:80px"></div><div class="g l y" style="left:0px;top:54px;width:80px">平均值</div><div class="g y" style="left:80px;top:54px;width:80px">6.5135</div><div class="g l y" style="left:160px;top:54px;width:80px">最大值</div><div class="g y" style="left:240px;top:54px;width:80px">6.519</div><div class="g l y" style="left:320px;top:54px;width:80px">最小值</div><div class="g y" style="left:400px;top:54px;width:80px">6.506</div><div class="g l" style="left:0px;top:81px;width:80px">上规格</div><div class="g " style="left:80px;top:81px;width:80px">6.555</div><div class="g l" style="left:160px;top:81px;width:80px">目标值</div><div class="g " style="left:240px;top:81px;width:80px">6.5</div><div class="g l" style="left:320px;top:81px;width:80px">下规格</div><div class="g " style="left:400px;top:81px;width:80px">6.445</div><div class="g l y" style="left:0px;top:108px;width:80px"><span style="letter-spacing:.5px">+3Sigma</span></div><div class="g y" style="left:80px;top:108px;width:80px">6.53</div><div class="g l y" style="left:160px;top:108px;width:80px"><span style="letter-spacing:.5px">-3Sigma</span></div><div class="g y" style="left:240px;top:108px;width:80px">6.496</div><div class="g y" style="left:320px;top:108px;width:80px"></div><div class="g y" style="left:400px;top:108px;width:80px"></div><div class="g " style="left:0px;top:135px;width:480px"></div><div class="g y" style="left:0px;top:162px;width:80px"></div><div class="g l y" style="left:80px;top:162px;width:160px">组内</div><div class="g l y" style="left:240px;top:162px;width:160px">整体</div><div class="g y" style="left:400px;top:162px;width:80px"></div><div class="g l " style="left:0px;top:189px;width:80px">STDEV</div><div class="g " style="left:80px;top:189px;width:160px">0.005656</div><div class="g " style="left:240px;top:189px;width:160px">0.004907</div><div class="g " style="left:400px;top:189px;width:80px"></div><div class="g l y" style="left:0px;top:216px;width:80px">CPK</div><div class="g y" style="left:80px;top:216px;width:160px">2.448</div><div class="g y" style="left:240px;top:216px;width:160px">2.822</div><div class="g y" style="left:400px;top:216px;width:80px"></div><div class="g l " style="left:0px;top:243px;width:80px">CP</div><div class="g " style="left:80px;top:243px;width:160px">3.241</div><div class="g " style="left:240px;top:243px;width:160px">3.736</div><div class="g " style="left:400px;top:243px;width:80px"></div><div class="g l y" style="left:0px;top:270px;width:80px">CPL</div><div class="g y" style="left:80px;top:270px;width:160px">4.035</div><div class="g y" style="left:240px;top:270px;width:160px">4.651</div><div class="g y" style="left:400px;top:270px;width:80px"></div><div class="g l " style="left:0px;top:297px;width:80px">CPU</div><div class="g " style="left:80px;top:297px;width:160px">2.448</div><div class="g " style="left:240px;top:297px;width:160px">2.822</div><div class="g " style="left:400px;top:297px;width:80px"></div><div class="g l y" style="left:0px;top:324px;width:80px">PPM &lt; LSL</div><div class="g y" style="left:80px;top:324px;width:160px">0</div><div class="g y" style="left:240px;top:324px;width:160px">0</div><div class="g y" style="left:400px;top:324px;width:80px">0</div><div class="g l " style="left:0px;top:351px;width:80px">PPM &gt; USL</div><div class="g " style="left:80px;top:351px;width:160px">0</div><div class="g " style="left:240px;top:351px;width:160px">0</div><div class="g " style="left:400px;top:351px;width:80px">0</div><div class="g l y" style="left:0px;top:378px;width:80px">PPM Total</div><div class="g y" style="left:80px;top:378px;width:160px">0</div><div class="g y" style="left:240px;top:378px;width:160px">0</div><div class="g y" style="left:400px;top:378px;width:80px">0</div><div class="g " style="left:0px;top:405px;width:480px"></div><div class="g y" style="left:0px;top:432px;width:80px"></div><div class="g y" style="left:80px;top:432px;width:80px"></div><div class="g y" style="left:160px;top:432px;width:80px"></div><div class="g y" style="left:240px;top:432px;width:80px"></div><div class="g y" style="left:320px;top:432px;width:80px"></div><div class="g y" style="left:400px;top:432px;width:80px"></div></div><div class="abs rp" style="left:963px;top:554px;width:853px;height:438px"><div class="abs" style="left:835px;top:0;width:16px;height:436px;background:#f0f0f0"></div><div class="abs" style="left:842px;top:17px;width:2px;height:348px;background:#7a7a7a"></div><div class="g h" style="left:0px;top:0px;width:80px">参数名称</div><div class="g y" style="left:80px;top:0px;width:400px"><span style="letter-spacing:.2px">平行距 14: 间距 (B2,B1,T1,#03,李一,#02)</span></div><div class="g l" style="left:0px;top:27px;width:80px">总样本数</div><div class="g " style="left:80px;top:27px;width:80px">6</div><div class="g l" style="left:160px;top:27px;width:80px">子组大小</div><div class="g " style="left:240px;top:27px;width:80px">1</div><div class="g " style="left:320px;top:27px;width:80px"></div><div class="g " style="left:400px;top:27px;width:80px"></div><div class="g l y" style="left:0px;top:54px;width:80px">平均值</div><div class="g y" style="left:80px;top:54px;width:80px">6.5176</div><div class="g l y" style="left:160px;top:54px;width:80px">最大值</div><div class="g y" style="left:240px;top:54px;width:80px">6.529</div><div class="g l y" style="left:320px;top:54px;width:80px">最小值</div><div class="g y" style="left:400px;top:54px;width:80px">6.512</div><div class="g l" style="left:0px;top:81px;width:80px">上规格</div><div class="g " style="left:80px;top:81px;width:80px">6.555</div><div class="g l" style="left:160px;top:81px;width:80px">目标值</div><div class="g " style="left:240px;top:81px;width:80px">6.5</div><div class="g l" style="left:320px;top:81px;width:80px">下规格</div><div class="g " style="left:400px;top:81px;width:80px">6.445</div><div class="g l y" style="left:0px;top:108px;width:80px"><span style="letter-spacing:.5px">+3Sigma</span></div><div class="g y" style="left:80px;top:108px;width:80px">6.531</div><div class="g l y" style="left:160px;top:108px;width:80px"><span style="letter-spacing:.5px">-3Sigma</span></div><div class="g y" style="left:240px;top:108px;width:80px">6.504</div><div class="g y" style="left:320px;top:108px;width:80px"></div><div class="g y" style="left:400px;top:108px;width:80px"></div><div class="g " style="left:0px;top:135px;width:480px"></div><div class="g y" style="left:0px;top:162px;width:80px"></div><div class="g l y" style="left:80px;top:162px;width:160px">组内</div><div class="g l y" style="left:240px;top:162px;width:160px">整体</div><div class="g y" style="left:400px;top:162px;width:80px"></div><div class="g l " style="left:0px;top:189px;width:80px">STDEV</div><div class="g " style="left:80px;top:189px;width:160px">0.004521</div><div class="g " style="left:240px;top:189px;width:160px">0.006672</div><div class="g " style="left:400px;top:189px;width:80px"></div><div class="g l y" style="left:0px;top:216px;width:80px">CPK</div><div class="g y" style="left:80px;top:216px;width:160px">2.757</div><div class="g y" style="left:240px;top:216px;width:160px">1.868</div><div class="g y" style="left:400px;top:216px;width:80px"></div><div class="g l " style="left:0px;top:243px;width:80px">CP</div><div class="g " style="left:80px;top:243px;width:160px">4.055</div><div class="g " style="left:240px;top:243px;width:160px">2.748</div><div class="g " style="left:400px;top:243px;width:80px"></div><div class="g l y" style="left:0px;top:270px;width:80px">CPL</div><div class="g y" style="left:80px;top:270px;width:160px">5.352</div><div class="g y" style="left:240px;top:270px;width:160px">3.627</div><div class="g y" style="left:400px;top:270px;width:80px"></div><div class="g l " style="left:0px;top:297px;width:80px">CPU</div><div class="g " style="left:80px;top:297px;width:160px">2.757</div><div class="g " style="left:240px;top:297px;width:160px">1.868</div><div class="g " style="left:400px;top:297px;width:80px"></div><div class="g l y" style="left:0px;top:324px;width:80px">PPM &lt; LSL</div><div class="g y" style="left:80px;top:324px;width:160px">0</div><div class="g y" style="left:240px;top:324px;width:160px">0</div><div class="g y" style="left:400px;top:324px;width:80px">0</div><div class="g l " style="left:0px;top:351px;width:80px">PPM &gt; USL</div><div class="g " style="left:80px;top:351px;width:160px">0</div><div class="g " style="left:240px;top:351px;width:160px">0</div><div class="g " style="left:400px;top:351px;width:80px">0</div><div class="g l y" style="left:0px;top:378px;width:80px">PPM Total</div><div class="g y" style="left:80px;top:378px;width:160px">0</div><div class="g y" style="left:240px;top:378px;width:160px">0</div><div class="g y" style="left:400px;top:378px;width:80px">0</div><div class="g " style="left:0px;top:405px;width:480px"></div><div class="g y" style="left:0px;top:432px;width:80px"></div><div class="g y" style="left:80px;top:432px;width:80px"></div><div class="g y" style="left:160px;top:432px;width:80px"></div><div class="g y" style="left:240px;top:432px;width:80px"></div><div class="g y" style="left:320px;top:432px;width:80px"></div><div class="g y" style="left:400px;top:432px;width:80px"></div></div><svg class="abs" style="left:1700px;top:1001px" width="24" height="4" viewBox="1700 1001 24 4"><path d="M1705 1005 L1714.5 1002.2 L1718 1002 L1720 1005 Z" fill="#fb6f36"/></svg></body></html>
